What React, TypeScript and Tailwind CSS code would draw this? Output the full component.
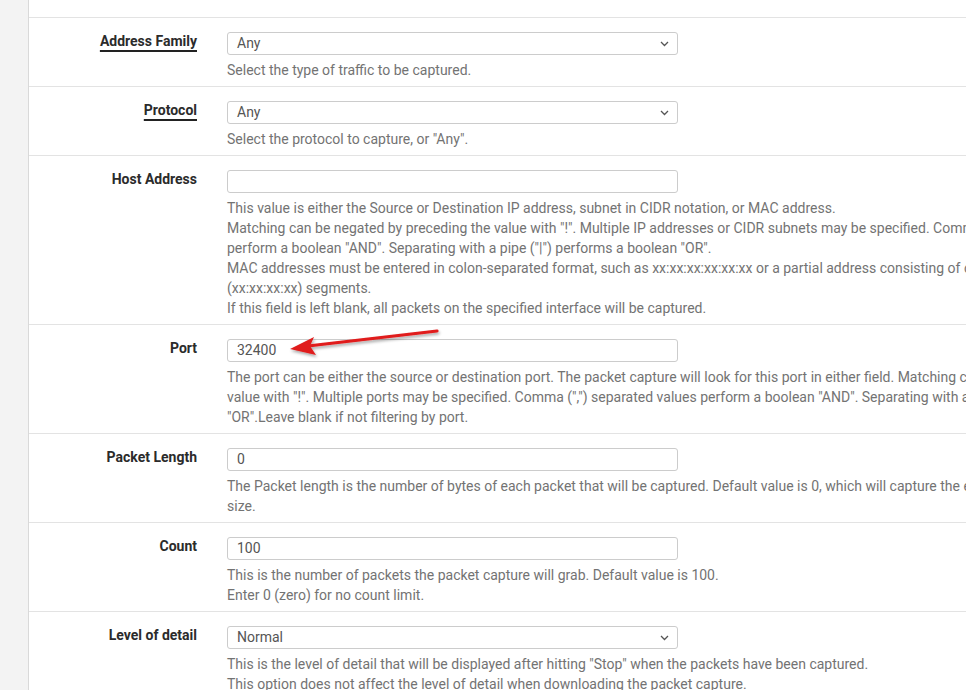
import React from "react";

type Row = {
  label: string;
  link?: boolean;
  kind: "select" | "input";
  value: string;
  help: string[];
};

const rows: Row[] = [
  { label: "Address Family", link: true, kind: "select", value: "Any", help: ["Select the type of traffic to be captured."] },
  { label: "Protocol", link: true, kind: "select", value: "Any", help: ['Select the protocol to capture, or "Any".'] },
  {
    label: "Host Address",
    kind: "input",
    value: "",
    help: [
      "This value is either the Source or Destination IP address, subnet in CIDR notation, or MAC address.",
      'Matching can be negated by preceding the value with "!". Multiple IP addresses or CIDR subnets may be specified. Comma (",") separated values',
      'perform a boolean "AND". Separating with a pipe ("|") performs a boolean "OR".',
      "MAC addresses must be entered in colon-separated format, such as xx:xx:xx:xx:xx:xx or a partial address consisting of one (xx), two (xx:xx), four",
      "(xx:xx:xx:xx) segments.",
      "If this field is left blank, all packets on the specified interface will be captured.",
    ],
  },
  {
    label: "Port",
    kind: "input",
    value: "32400",
    help: [
      "The port can be either the source or destination port. The packet capture will look for this port in either field. Matching can be negated by preceding the",
      'value with "!". Multiple ports may be specified. Comma (",") separated values perform a boolean "AND". Separating with a pipe ("|") performs a boolean',
      '"OR".Leave blank if not filtering by port.',
    ],
  },
  {
    label: "Packet Length",
    kind: "input",
    value: "0",
    help: [
      "The Packet length is the number of bytes of each packet that will be captured. Default value is 0, which will capture the entire frame regardless of its",
      "size.",
    ],
  },
  {
    label: "Count",
    kind: "input",
    value: "100",
    help: ["This is the number of packets the packet capture will grab. Default value is 100.", "Enter 0 (zero) for no count limit."],
  },
  {
    label: "Level of detail",
    kind: "select",
    value: "Normal",
    help: [
      'This is the level of detail that will be displayed after hitting "Stop" when the packets have been captured.',
      "This option does not affect the level of detail when downloading the packet capture.",
    ],
  },
];

function Field({ row }: { row: Row }) {
  return (
    <div className="flex border-t border-[#e3e3e3] pt-[13px] pb-[6px]">
      <div className="-mt-[2px] w-[183px] shrink-0 pr-[15px] text-right">
        <span
          className={
            "text-[14px] leading-[20px] font-bold text-[#2b2b2b] " +
            (row.link ? "underline decoration-[1.5px] underline-offset-[4px] decoration-[#222]" : "")
          }
        >
          {row.label}
        </span>
      </div>
      <div className="pl-[15px] pt-px">
        <div className="flex h-[23px] w-[451px] items-center justify-between rounded-[3px] border border-[#ccc] bg-white pl-[9px] pr-[8px] text-[14px] text-[#555]">
          <span>{row.value}</span>
          {row.kind === "select" && (
            <svg width="9" height="6" viewBox="0 0 9 6" className="mt-px">
              <path d="M1 1l3.5 3.5L8 1" fill="none" stroke="#555" strokeWidth="1.3" />
            </svg>
          )}
        </div>
        <div className="mt-[5px] whitespace-nowrap text-[14px] leading-[20px] text-[#737373]">
          {row.help.map((l, i) => (
            <div key={i}>{l}</div>
          ))}
        </div>
      </div>
    </div>
  );
}

export default function App() {
  return (
    <div className="relative flex h-[690px] w-[966px] overflow-hidden bg-white" style={{ fontFamily: "Roboto, 'Liberation Sans', sans-serif" }}>
      <div className="w-[29px] shrink-0 border-r border-[#d9d9d9] bg-[#f3f3f3]" />
      <div className="flex-1">
        <div className="h-[17px]" />
        {rows.map((r) => (
          <Field key={r.label} row={r} />
        ))}
      </div>
      <svg className="pointer-events-none absolute left-[280px] top-[322px]" width="170" height="40" viewBox="0 0 170 40">
        <defs>
          <filter id="sh" x="-20%" y="-50%" width="140%" height="200%">
            <feDropShadow dx="1" dy="2" stdDeviation="1.5" floodColor="#000" floodOpacity="0.35" />
          </filter>
        </defs>
        <g filter="url(#sh)">
          <path d="M157 9 L28 24" stroke="#e01b1b" strokeWidth="3.2" strokeLinecap="round" fill="none" />
          <path d="M10 27 L34 15 L30 24 L36 33 Z" fill="#e01b1b" />
        </g>
      </svg>
    </div>
  );
}
